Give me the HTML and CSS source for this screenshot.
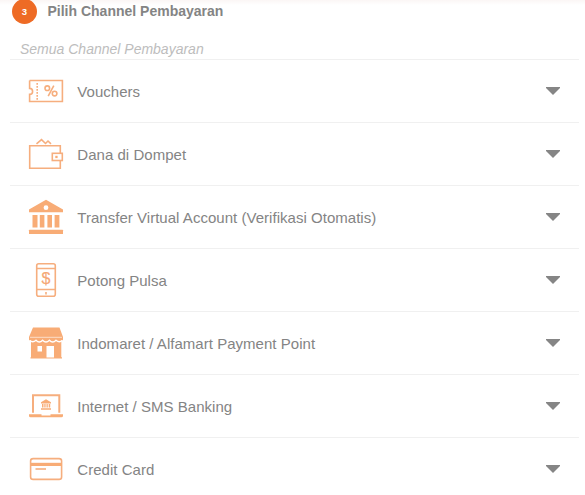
FILE: index.html
```html
<!DOCTYPE html>
<html lang="id">
<head>
<meta charset="utf-8">
<title>Pilih Channel Pembayaran</title>
<link rel="stylesheet" href="styles.css">
</head>
<body>
<main class="payment">
  <header class="step"><span class="step-number">3</span><h1 class="step-title">Pilih Channel Pembayaran</h1></header>
  <h2 class="subtitle">Semua Channel Pembayaran</h2>
  <ul class="channels">
    <li class="channel">
      <svg class="icon" viewBox="0 -.9 50 44"><path class="line" d="M9.600 10.600H42.400V31.600H9.600V24.500a3 3 0 0 0 0-6V10.600"/><path class="line" stroke-dasharray="1.800 1.200" d="M17.200 13V30"/><g class="line"><circle cx="27.300" cy="18.300" r="2.300"/><circle cx="34.600" cy="23.700" r="2.300"/><path d="M33.800 15.800L28.200 26.300"/></g></svg>
      <span class="label">Vouchers</span><svg class="caret" viewBox="0 0 14 8"><path d="M0 0H14V1L7 8L0 1Z"/></svg>
    </li>
    <li class="channel">
      <svg class="icon" viewBox="0 0 50 44"><path class="line" d="M33 13.700H9.700V36.300H40.300V29M40.300 21V13.700H33M16.500 11.800L21.500 7.600L25.500 11.500L28 9L31 11.800"/><rect class="line" x="32.300" y="21.300" width="10" height="7.200"/><rect class="solid" x="35.300" y="23.800" width="2.300" height="2.300"/></svg>
      <span class="label">Dana di Dompet</span><svg class="caret" viewBox="0 0 14 8"><path d="M0 0H14V1L7 8L0 1Z"/></svg>
    </li>
    <li class="channel">
      <svg class="icon" viewBox="0 0 50 44"><path class="solid" fill-rule="evenodd" d="M26 4.800L43 14.500V17.200H9V14.500ZM26 10.300a2.400 2.400 0 1 0 0 4.800a2.400 2.400 0 0 0 0-4.800Z"/><path class="solid" d="M12.500 20h5v12.500h-5ZM19.800 20h4.600v12.500h-4.600ZM27.400 20h4.600v12.500h-4.600ZM34.600 20h4.800v12.500h-4.800Z"/><rect class="solid" x="9" y="34.800" width="34" height="4.300" rx=".5"/></svg>
      <span class="label">Transfer Virtual Account (Verifikasi Otomatis)</span><svg class="caret" viewBox="0 0 14 8"><path d="M0 0H14V1L7 8L0 1Z"/></svg>
    </li>
    <li class="channel">
      <svg class="icon" viewBox="0 0 50 44"><rect class="line" x="16.700" y="5.700" width="18.600" height="32.600" rx="2"/><path class="line" d="M17 10.500H35M17 31.500H35"/><path class="line" d="M26 34v2.500"/><text class="glyph dollar" x="26" y="26.300">$</text></svg>
      <span class="label">Potong Pulsa</span><svg class="caret" viewBox="0 0 14 8"><path d="M0 0H14V1L7 8L0 1Z"/></svg>
    </li>
    <li class="channel">
      <svg class="icon" viewBox="0 0 50 44"><path class="solid" d="M13 6.500H39.500L43 16V19.500H41.300V36.300H42V37.500H10.500V36.300H11V19.500H9V16Z"/><path class="gap thin" d="M10 16.300H42"/><path class="gap" d="M9.500 19.200q3.200 3 6.500 0q3.300 3.600 6.600 0q3.400 3.600 6.800 0q3.300 3.600 6.600 0q3.300 3 6.500 0"/><path class="hole" d="M17.500 25H22V30.500H17.500ZM26.500 25H34V36.500H26.500Z"/></svg>
      <span class="label">Indomaret / Alfamart Payment Point</span><svg class="caret" viewBox="0 0 14 8"><path d="M0 0H14V1L7 8L0 1Z"/></svg>
    </li>
    <li class="channel">
      <svg class="icon" viewBox="0 0 50 44"><path class="line laptop" d="M13 28.800V11.200H39.300V28.800"/><path class="solid" d="M9 30.200H21.500V31.500H30.500V30.200H43v1.500q0 1.500-1.500 1.500h-31Q9 33.200 9 31.700Z"/><path class="solid" d="M26 15.200L31 18.200V19.400H21V18.200ZM22 20h1.500v3.600H22ZM24.300 20h1.300v3.600h-1.300ZM26.500 20h1.300v3.600h-1.300ZM28.700 20h1.500v3.600h-1.500ZM21 24.300H31V25.800H21Z"/></svg>
      <span class="label">Internet / SMS Banking</span><svg class="caret" viewBox="0 0 14 8"><path d="M0 0H14V1L7 8L0 1Z"/></svg>
    </li>
    <li class="channel">
      <svg class="icon" viewBox="0 0 50 44"><rect class="line" x="10.600" y="11.600" width="31" height="20.800" rx="2.500"/><path class="solid" d="M10.500 15.800H42V19H10.500Z"/><path class="line" d="M15.500 22H26"/></svg>
      <span class="label">Credit Card</span><svg class="caret" viewBox="0 0 14 8"><path d="M0 0H14V1L7 8L0 1Z"/></svg>
    </li>
  </ul>
</main>
</body>
</html>
```
FILE: styles.css
```css
* { box-sizing: border-box; }
body {
  margin: 0;
  height: 495px;
  overflow: hidden;
  background: linear-gradient(#fbf6f5, #fff 5px);
  color: #848484;
  font-family: "Liberation Sans", Arial, sans-serif;
}
.payment { padding: 0 6px 0 10px; }
.step { display: flex; height: 24px; padding-left: 2px; }
.step-number {
  width: 25px;
  height: 25px;
  margin-top: -1px;
  border-radius: 50%;
  background: #ee6b25;
  color: #fff;
  font-size: 9.500px;
  font-weight: bold;
  line-height: 26px;
  text-align: center;
}
.step-title { margin: 0 0 0 10.500px; font-size: 14px; line-height: 22px; }
.subtitle {
  height: 35px;
  margin: 0;
  padding: 16px 0 0 10px;
  color: #bdbdbd;
  font-size: 14px;
  font-weight: normal;
  font-style: italic;
  line-height: 18px;
}
.channels { margin: 0; padding: 0; list-style: none; }
.channel {
  display: flex;
  align-items: center;
  height: 63px;
  padding: 0 19px 0 10px;
  border-top: 1px solid #f0f0f0;
}
.icon { width: 50px; height: 44px; margin-right: 7.300px; }
.label { flex: 1; padding-top: 2px; font-size: 15px; line-height: 20px; letter-spacing: .03px; }
.caret { width: 14px; height: 8px; fill: #858585; }
.line { fill: none; stroke: #f6ae7e; stroke-width: 1.600; }
.laptop { stroke-width: 2; }
.solid { fill: #f8ac76; }
.gap { fill: none; stroke: #fff; stroke-width: 1.300; }
.thin { stroke-width: .6; }
.hole { fill: #fff; }
.glyph { fill: #f5a775; font-family: "Liberation Sans", Arial, sans-serif; text-anchor: middle; }
.dollar { font-size: 16px; stroke: #f5a775; stroke-width: .2; }
```
